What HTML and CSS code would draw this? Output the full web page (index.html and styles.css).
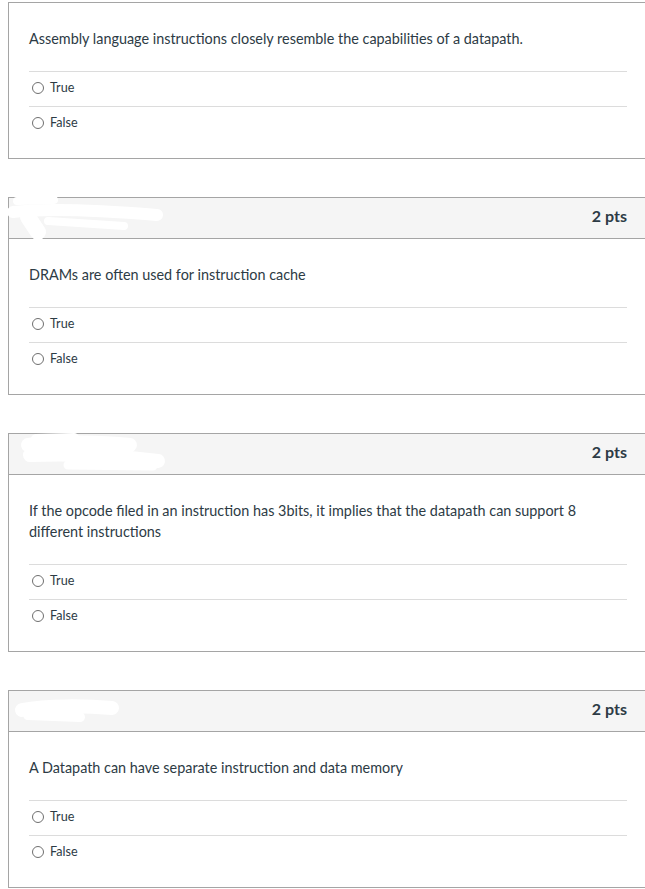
FILE: index.html
```html
<!DOCTYPE html>
<html lang="en">
<head>
<meta charset="utf-8">
<title>Quiz</title>
<link rel="stylesheet" href="styles.css">
</head>
<body>
<div class="quiz">
  <section class="question first">
    <div class="q-body">
      <p class="q-text">Assembly language instructions closely resemble the capabilities of a datapath.</p>
      <ul class="answers">
        <li class="answer"><span class="radio"></span><span class="label">True</span></li>
        <li class="answer"><span class="radio"></span><span class="label">False</span></li>
      </ul>
    </div>
  </section>

  <section class="question">
    <svg class="redact" width="170" height="44" viewBox="0 0 170 44">
      <g fill="none" stroke="#fff" stroke-linecap="round" stroke-linejoin="round">
        <path d="M9 4 L46 3" stroke-width="8"/>
        <path d="M5 15 C 40 11, 100 14, 149 18" stroke-width="12"/>
        <path d="M20 20 L30 35" stroke-width="16"/>
        <path d="M40 24 L116 29" stroke-width="8"/>
      </g>
    </svg>
    <header class="q-header"><span class="pts">2 pts</span></header>
    <div class="q-body">
      <p class="q-text">DRAMs are often used for instruction cache</p>
      <ul class="answers">
        <li class="answer"><span class="radio"></span><span class="label">True</span></li>
        <li class="answer"><span class="radio"></span><span class="label">False</span></li>
      </ul>
    </div>
  </section>

  <section class="question">
    <svg class="redact" width="170" height="44" viewBox="0 0 170 44">
      <g fill="none" stroke="#fff" stroke-linecap="round" stroke-linejoin="round">
        <path d="M28 6 L66 5" stroke-width="10"/>
        <path d="M20 12 C 50 8, 95 9, 122 12" stroke-width="14"/>
        <path d="M22 22 C 70 20, 120 24, 150 28" stroke-width="14"/>
        <path d="M60 32 L145 33" stroke-width="9"/>
      </g>
    </svg>
    <header class="q-header"><span class="pts">2 pts</span></header>
    <div class="q-body">
      <p class="q-text">If the opcode filed in an instruction has 3bits, it implies that the datapath can support 8 different instructions</p>
      <ul class="answers">
        <li class="answer"><span class="radio"></span><span class="label">True</span></li>
        <li class="answer"><span class="radio"></span><span class="label">False</span></li>
      </ul>
    </div>
  </section>

  <section class="question">
    <svg class="redact" width="170" height="44" viewBox="0 0 170 44">
      <g fill="none" stroke="#fff" stroke-linecap="round" stroke-linejoin="round">
        <path d="M14 20 C 40 15, 80 16, 104 18" stroke-width="14"/>
        <path d="M20 25 L72 27" stroke-width="10"/>
      </g>
    </svg>
    <header class="q-header"><span class="pts">2 pts</span></header>
    <div class="q-body">
      <p class="q-text">A Datapath can have separate instruction and data memory</p>
      <ul class="answers">
        <li class="answer"><span class="radio"></span><span class="label">True</span></li>
        <li class="answer"><span class="radio"></span><span class="label">False</span></li>
      </ul>
    </div>
  </section>
</div>
</body>
</html>
```

FILE: styles.css
```css
html, body {
  margin: 0;
  padding: 0;
  overflow: hidden;
  background: #fff;
}

body {
  font-family: Lato, "Open Sans", "Liberation Sans", sans-serif;
  color: #2d3b45;
}

.quiz {
  display: flex;
  flex-direction: column;
  gap: 38px;
  padding-left: 8px;
  padding-top: 2px;
  width: 640px;
}

.question {
  position: relative;
  border: 1px solid #a5a5a5;
  background: #fff;
}

.redact {
  position: absolute;
  top: -1px;
  left: -1px;
}

.q-header {
  height: 40px;
  background: #f5f5f5;
  border-bottom: 1px solid #a5a5a5;
  display: flex;
  align-items: center;
  justify-content: flex-end;
  padding: 0 20px;
}

.pts {
  font-weight: 700;
  font-size: 16px;
  line-height: 20px;
  margin-bottom: 4px;
  color: #2d3b45;
}

.q-body {
  padding: 25px 20px 17px;
}

.q-text {
  margin: 0 0 22px;
  font-size: 14.4px;
  line-height: 21px;
}

.answers {
  list-style: none;
  margin: 0;
  padding: 0;
}

.answer {
  display: flex;
  align-items: center;
  gap: 6px;
  border-top: 1px solid #dcdcdc;
  padding: 6px 0 8px 3px;
  height: 20px;
  font-size: 12.6px;
}

.radio {
  width: 10px;
  height: 10px;
  border: 1px solid #6f6f6f;
  border-radius: 50%;
  background: #fff;
  flex: none;
}

.label {
  line-height: 20px;
}
```
